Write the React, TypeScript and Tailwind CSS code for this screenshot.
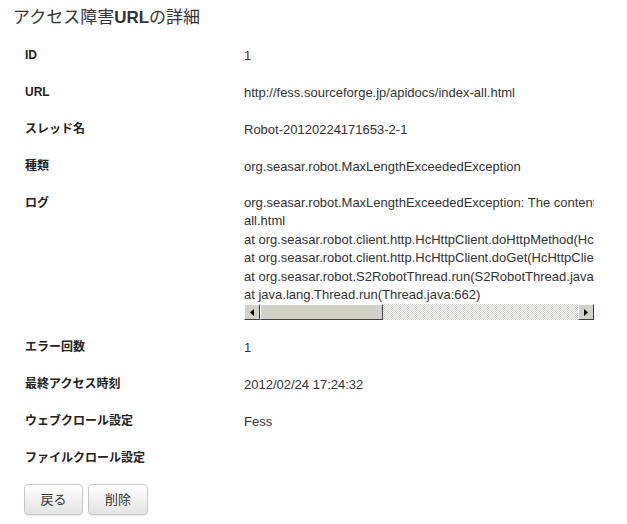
const rows: [string, string][] = [
  ["ID", "1"],
  ["URL", "http://fess.sourceforge.jp/apidocs/index-all.html"],
  ["スレッド名", "Robot-20120224171653-2-1"],
  ["種類", "org.seasar.robot.MaxLengthExceededException"],
];

const rowsAfter: [string, string][] = [
  ["エラー回数", "1"],
  ["最終アクセス時刻", "2012/02/24 17:24:32"],
  ["ウェブクロール設定", "Fess"],
  ["ファイルクロール設定", ""],
];

const logLines = [
  "org.seasar.robot.MaxLengthExceededException: The content length (3159812 byte) is over 2621440 byte. The url is http://fess.sourceforge.jp/apidocs/index-",
  "all.html",
  "at org.seasar.robot.client.http.HcHttpClient.doHttpMethod(HcHttpClient.java:525)",
  "at org.seasar.robot.client.http.HcHttpClient.doGet(HcHttpClient.java:396)",
  "at org.seasar.robot.S2RobotThread.run(S2RobotThread.java:141)",
  "at java.lang.Thread.run(Thread.java:662)",
];

function Row({ label, value }: { label: string; value: string }) {
  return (
    <div className="flex py-[9px] leading-[19px]">
      <div className="w-[219px] shrink-0 font-bold text-[12px] text-[#222]">{label}</div>
      <div className="text-[13px] text-[#333]">{value}</div>
    </div>
  );
}

function ArrowBtn({ dir }: { dir: "left" | "right" }) {
  return (
    <div className="w-4 h-4 shrink-0 bg-[#d4d0c8] border border-t-[#fff] border-l-[#fff] border-r-[#404040] border-b-[#404040] flex items-center justify-center">
      <svg width="4" height="7" viewBox="0 0 4 7">
        {dir === "left" ? (
          <path d="M4 0 L0 3.5 L4 7 Z" fill="#000" />
        ) : (
          <path d="M0 0 L4 3.5 L0 7 Z" fill="#000" />
        )}
      </svg>
    </div>
  );
}

function Scrollbar() {
  return (
    <div className="flex h-4 w-[350px]">
      <ArrowBtn dir="left" />
      <div className="w-[123px] h-4 bg-[#d4d0c8] border border-t-[#fff] border-l-[#fff] border-r-[#404040] border-b-[#404040]" />
      <div className="flex-1 h-4 bg-[repeating-conic-gradient(#d4d0c8_0_25%,#ffffff_0_50%)] bg-[length:2px_2px]" />
      <ArrowBtn dir="right" />
    </div>
  );
}

export default function App() {
  return (
    <div
      className="bg-white w-[627px] h-[524px] text-[12px] text-[#333]"
      style={{ fontFamily: '"Liberation Sans", Arial, "Noto Sans CJK JP", sans-serif' }}
    >
      <h1 className="pl-[13px] pt-[6px] text-[17px] leading-[24px] text-[#333] font-normal">
        アクセス障害<span className="font-bold">URL</span>の詳細
      </h1>

      <div className="pl-[25px] mt-[7px]">
        {rows.map(([l, v]) => (
          <Row key={l} label={l} value={v} />
        ))}

        <div className="flex py-[9px]">
          <div className="w-[219px] shrink-0 font-bold text-[#222] leading-[19px]">ログ</div>
          <div className="w-[350px]">
            <div className="overflow-hidden whitespace-pre leading-[18.4px] text-[13px] text-[#333]">
              {logLines.map((l, i) => (
                <div key={i}>{l}</div>
              ))}
            </div>
            <Scrollbar />
          </div>
        </div>

        {rowsAfter.map(([l, v]) => (
          <Row key={l} label={l} value={v} />
        ))}

        <div className="flex gap-[5px] mt-[7px] -ml-[1px]">
          <button className="w-[59px] h-[31px] rounded-[4px] border border-[#c8c8c8] bg-gradient-to-b from-white to-[#e4e4e4] text-[13px] text-[#333] shadow-[0_1px_1px_rgba(0,0,0,0.08)]">
            戻る
          </button>
          <button className="w-[60px] h-[31px] rounded-[4px] border border-[#c8c8c8] bg-gradient-to-b from-white to-[#e4e4e4] text-[13px] text-[#333] shadow-[0_1px_1px_rgba(0,0,0,0.08)]">
            削除
          </button>
        </div>
      </div>
    </div>
  );
}
